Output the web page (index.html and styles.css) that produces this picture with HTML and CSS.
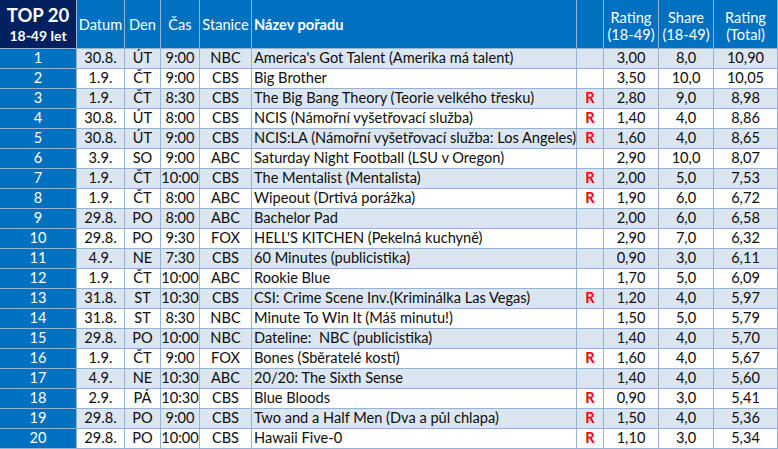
FILE: index.html
```html
<!DOCTYPE html>
<html lang="cs">
<head>
<meta charset="utf-8">
<title>TOP 20</title>
<link rel="stylesheet" href="styles.css">
</head>
<body>
<div class="sheet">
  <div class="row head">
    <div class="c top"><span class="big">TOP 20</span><span class="small">18-49 let</span></div>
    <div class="c">Datum</div>
    <div class="c">Den</div>
    <div class="c">Čas</div>
    <div class="c">Stanice</div>
    <div class="c name">Název pořadu</div>
    <div class="c"></div>
    <div class="c two">Rating<br>(18-49)</div>
    <div class="c two">Share<br>(18-49)</div>
    <div class="c two">Rating<br>(Total)</div>
  </div>
  <div class="row odd"><div class="c rank">1</div><div class="c">30.8.</div><div class="c">ÚT</div><div class="c">9:00</div><div class="c">NBC</div><div class="c name">America's Got Talent (Amerika má talent)</div><div class="c r"></div><div class="c">3,00</div><div class="c">8,0</div><div class="c">10,90</div></div>
  <div class="row"><div class="c rank">2</div><div class="c">1.9.</div><div class="c">ČT</div><div class="c">9:00</div><div class="c">CBS</div><div class="c name">Big Brother</div><div class="c r"></div><div class="c">3,50</div><div class="c">10,0</div><div class="c">10,05</div></div>
  <div class="row odd"><div class="c rank">3</div><div class="c">1.9.</div><div class="c">ČT</div><div class="c">8:30</div><div class="c">CBS</div><div class="c name">The Big Bang Theory (Teorie velkého třesku)</div><div class="c r">R</div><div class="c">2,80</div><div class="c">9,0</div><div class="c">8,98</div></div>
  <div class="row"><div class="c rank">4</div><div class="c">30.8.</div><div class="c">ÚT</div><div class="c">8:00</div><div class="c">CBS</div><div class="c name">NCIS (Námořní vyšetřovací služba)</div><div class="c r">R</div><div class="c">1,40</div><div class="c">4,0</div><div class="c">8,86</div></div>
  <div class="row odd"><div class="c rank">5</div><div class="c">30.8.</div><div class="c">ÚT</div><div class="c">9:00</div><div class="c">CBS</div><div class="c name">NCIS:LA (Námořní vyšetřovací služba: Los Angeles)</div><div class="c r">R</div><div class="c">1,60</div><div class="c">4,0</div><div class="c">8,65</div></div>
  <div class="row"><div class="c rank">6</div><div class="c">3.9.</div><div class="c">SO</div><div class="c">9:00</div><div class="c">ABC</div><div class="c name">Saturday Night Football (LSU v Oregon)</div><div class="c r"></div><div class="c">2,90</div><div class="c">10,0</div><div class="c">8,07</div></div>
  <div class="row odd"><div class="c rank">7</div><div class="c">1.9.</div><div class="c">ČT</div><div class="c">10:00</div><div class="c">CBS</div><div class="c name">The Mentalist (Mentalista)</div><div class="c r">R</div><div class="c">2,00</div><div class="c">5,0</div><div class="c">7,53</div></div>
  <div class="row"><div class="c rank">8</div><div class="c">1.9.</div><div class="c">ČT</div><div class="c">8:00</div><div class="c">ABC</div><div class="c name">Wipeout (Drtivá porážka)</div><div class="c r">R</div><div class="c">1,90</div><div class="c">6,0</div><div class="c">6,72</div></div>
  <div class="row odd"><div class="c rank">9</div><div class="c">29.8.</div><div class="c">PO</div><div class="c">8:00</div><div class="c">ABC</div><div class="c name">Bachelor Pad</div><div class="c r"></div><div class="c">2,00</div><div class="c">6,0</div><div class="c">6,58</div></div>
  <div class="row"><div class="c rank">10</div><div class="c">29.8.</div><div class="c">PO</div><div class="c">9:30</div><div class="c">FOX</div><div class="c name">HELL'S KITCHEN (Pekelná kuchyně)</div><div class="c r"></div><div class="c">2,90</div><div class="c">7,0</div><div class="c">6,32</div></div>
  <div class="row odd"><div class="c rank">11</div><div class="c">4.9.</div><div class="c">NE</div><div class="c">7:30</div><div class="c">CBS</div><div class="c name">60 Minutes (publicistika)</div><div class="c r"></div><div class="c">0,90</div><div class="c">3,0</div><div class="c">6,11</div></div>
  <div class="row"><div class="c rank">12</div><div class="c">1.9.</div><div class="c">ČT</div><div class="c">10:00</div><div class="c">ABC</div><div class="c name">Rookie Blue</div><div class="c r"></div><div class="c">1,70</div><div class="c">5,0</div><div class="c">6,09</div></div>
  <div class="row odd"><div class="c rank">13</div><div class="c">31.8.</div><div class="c">ST</div><div class="c">10:30</div><div class="c">CBS</div><div class="c name">CSI: Crime Scene Inv.(Kriminálka Las Vegas)</div><div class="c r">R</div><div class="c">1,20</div><div class="c">4,0</div><div class="c">5,97</div></div>
  <div class="row"><div class="c rank">14</div><div class="c">31.8.</div><div class="c">ST</div><div class="c">8:30</div><div class="c">NBC</div><div class="c name">Minute To Win It (Máš minutu!)</div><div class="c r"></div><div class="c">1,50</div><div class="c">5,0</div><div class="c">5,79</div></div>
  <div class="row odd"><div class="c rank">15</div><div class="c">29.8.</div><div class="c">PO</div><div class="c">10:00</div><div class="c">NBC</div><div class="c name">Dateline:&nbsp; NBC (publicistika)</div><div class="c r"></div><div class="c">1,40</div><div class="c">4,0</div><div class="c">5,70</div></div>
  <div class="row"><div class="c rank">16</div><div class="c">1.9.</div><div class="c">ČT</div><div class="c">9:00</div><div class="c">FOX</div><div class="c name">Bones (Sběratelé kostí)</div><div class="c r">R</div><div class="c">1,60</div><div class="c">4,0</div><div class="c">5,67</div></div>
  <div class="row odd"><div class="c rank">17</div><div class="c">4.9.</div><div class="c">NE</div><div class="c">10:30</div><div class="c">ABC</div><div class="c name">20/20: The Sixth Sense</div><div class="c r"></div><div class="c">1,40</div><div class="c">4,0</div><div class="c">5,60</div></div>
  <div class="row"><div class="c rank">18</div><div class="c">2.9.</div><div class="c">PÁ</div><div class="c">10:30</div><div class="c">CBS</div><div class="c name">Blue Bloods</div><div class="c r">R</div><div class="c">0,90</div><div class="c">3,0</div><div class="c">5,41</div></div>
  <div class="row odd"><div class="c rank">19</div><div class="c">29.8.</div><div class="c">PO</div><div class="c">9:00</div><div class="c">CBS</div><div class="c name">Two and a Half Men (Dva a půl chlapa)</div><div class="c r">R</div><div class="c">1,50</div><div class="c">4,0</div><div class="c">5,36</div></div>
  <div class="row"><div class="c rank">20</div><div class="c">29.8.</div><div class="c">PO</div><div class="c">10:00</div><div class="c">CBS</div><div class="c name">Hawaii Five-0</div><div class="c r">R</div><div class="c">1,10</div><div class="c">3,0</div><div class="c">5,34</div></div>
</div>
</body>
</html>
```
FILE: styles.css
```css
html, body {
  margin: 0;
  padding: 0;
  background: #ffffff;
}
.sheet {
  display: grid;
  grid-template-columns: 76px 47px 35px 38px 51px 324px 26px 54px 54px 63px;
  grid-template-rows: 48px repeat(20, 19px);
  gap: 1px;
  padding: 0 1px 1px 0;
  width: 778px;
  box-sizing: border-box;
  background: #95b3d7;
  font-family: Lato, "Liberation Sans", sans-serif;
  font-size: 14.6px;
  color: #0d0d0d;
}
.row {
  display: contents;
}
.c {
  display: flex;
  align-items: center;
  justify-content: center;
  white-space: nowrap;
  overflow: hidden;
  background: #ffffff;
  line-height: 1;
}
.row.odd .c {
  background: #dce6f1;
}
.head .c {
  background: #0070c0;
  color: #ffffff;
  font-size: 14.6px;
  padding-top: 2px;
}
.head .two {
  text-align: center;
  line-height: 17px;
  padding-top: 4px;
}
.head .name {
  font-weight: bold;
}
.head .top {
  background: #002060;
  flex-direction: column;
  font-weight: bold;
  padding-top: 0;
}
.top .big {
  font-size: 18.5px;
  line-height: 24px;
}
.top .small {
  font-size: 14px;
  line-height: 18px;
}
.row .c.rank {
  background: #0070c0;
  color: #ffffff;
}
.c.name {
  justify-content: flex-start;
  padding-left: 2px;
}
.c.r {
  color: #ff0000;
  font-weight: bold;
}
```
